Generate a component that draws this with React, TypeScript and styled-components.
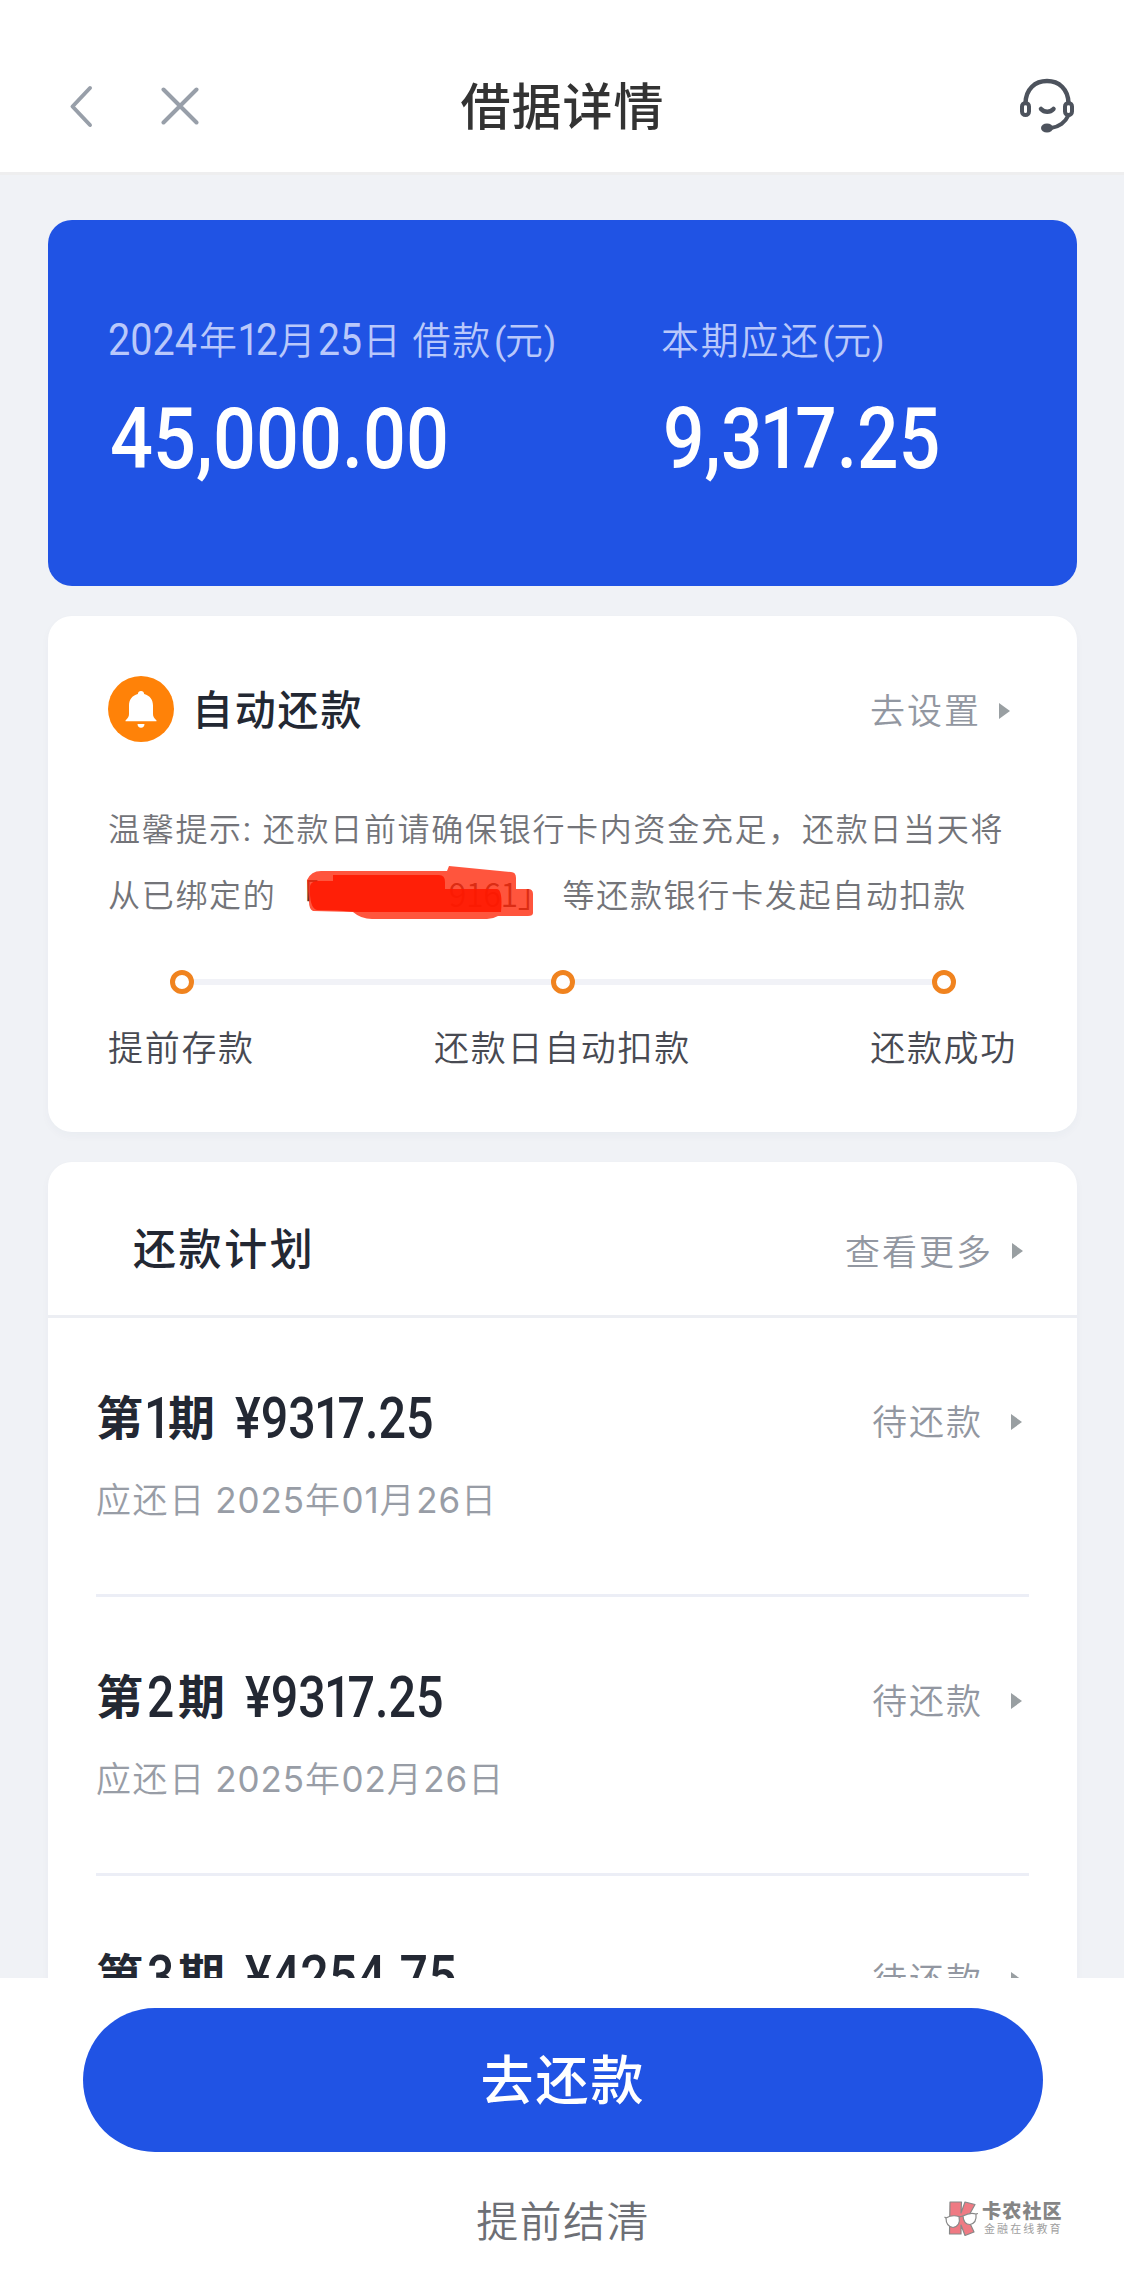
import React from 'react';
import styled, { createGlobalStyle } from 'styled-components';

const cjk = "'Noto Sans CJK SC', 'Noto Sans', sans-serif";

const GlobalStyle = createGlobalStyle`
  * { box-sizing: border-box; }
  body { margin: 0; background: #fff; font-family: ${cjk}; }
`;

const Screen = styled.div`
  display: flex;
  flex-direction: column;
  width: 1124px;
  height: 2288px;
  overflow: hidden;
  background: #f0f2f6;
`;

/* Header */
const Header = styled.header`
  display: grid;
  grid-template-columns: 1fr auto 1fr;
  align-items: center;
  height: 175px;
  padding: 39px 49px 0 65px;
  background: #fff;
  border-bottom: 3px solid #eeeeef;
  flex: none;
`;

const NavIcons = styled.div`
  display: flex;
  align-items: center;
  gap: 62px;
`;

const Title = styled.h1`
  margin: 0;
  padding-right: 15px;
  font-size: 50px;
  line-height: 60px;
  font-weight: 500;
  letter-spacing: 1px;
  color: #333;
  transform: translateY(-3px);
`;

const SupportIcon = styled.svg`
  justify-self: end;
`;

/* Scroll region */
const Content = styled.main`
  display: flex;
  flex-direction: column;
  gap: 30px;
  height: 1803px;
  flex: none;
  padding: 45px 47px 0 48px;
  overflow: hidden;
`;

const NumBox = styled.span<{ $w: number; $size: number; $sx?: number; $weight?: number; $left?: number; $drop?: number }>`
  display: inline-block;
  width: ${(p) => p.$w}px;
  margin-left: ${(p) => p.$left ?? 0}px;
  vertical-align: ${(p) => -(p.$drop ?? 0)}px;
  font-family: Roboto, sans-serif;
  font-size: ${(p) => p.$size}px;
  font-weight: ${(p) => p.$weight ?? 400};
  line-height: 1;
  letter-spacing: 0;
  white-space: pre;
  transform: scaleX(${(p) => p.$sx ?? 1});
  transform-origin: left;
`;

const NarrowOne = styled.span`
  margin: 0 -0.08em 0 -0.04em;
`;

type NumProps = React.ComponentProps<typeof NumBox> & { children: string };

/* Figures in which the digit one is set tighter than the others. */
function Num({ children, ...rest }: NumProps) {
  return (
    <NumBox {...rest}>
      {children.split(/(1)/).map((part, i) => (part === '1' && children.length > 1 ? <NarrowOne key={i}>1</NarrowOne> : part))}
    </NumBox>
  );
}

const Summary = styled.section`
  display: grid;
  grid-template-columns: 553px 1fr;
  align-content: start;
  height: 366px;
  flex: none;
  padding: 92px 0 0 60px;
  border-radius: 24px;
  background: #2053e4;
`;

const SummaryLabel = styled.div`
  height: 52px;
  line-height: 52px;
  font-size: 38px;
  font-weight: 350;
  letter-spacing: 1.8px;
  color: #b9c8fb;
  white-space: pre;
`;

const Amount = styled.div`
  height: 90px;
  margin-top: 32px;
  padding-left: 2px;
  line-height: 90px;
  color: #fff;
`;

const Card = styled.section`
  flex: none;
  border-radius: 24px;
  background: #fff;
  box-shadow: 0 4px 10px rgba(40, 50, 80, 0.03);
`;

const AutoCard = styled(Card)`
  height: 516px;
  padding: 60px 60px 0;
`;

const AutoHead = styled.div`
  display: flex;
  align-items: center;
  height: 66px;
  padding-right: 7px;
`;

const AutoTitle = styled.h2`
  flex: 1;
  margin: 0 0 5px 18px;
  font-size: 41px;
  line-height: 60px;
  font-weight: 500;
  letter-spacing: 1.8px;
  color: #232833;
`;

const LinkText = styled.span<{ $gap: number }>`
  display: flex;
  align-items: center;
  gap: ${(p) => p.$gap}px;
  font-size: 35px;
  line-height: 50px;
  font-weight: 350;
  letter-spacing: 2px;
  color: #9297a1;
`;

const Triangle = styled.i`
  width: 0;
  height: 0;
  margin-top: 3px;
  border-style: solid;
  border-width: 8px 0 8px 11px;
  border-color: transparent transparent transparent #999fa2;
`;

const Tip = styled.p`
  margin: 52px 0 0;
  width: 920px;
  height: 132px;
  font-size: 32px;
  line-height: 66px;
  font-weight: 350;
  letter-spacing: 1.7px;
  color: #737479;
  white-space: pre;
`;

const Masked = styled.span`
  position: relative;
  display: inline-block;
  width: 286px;
  height: 66px;
  vertical-align: top;
`;

const MaskedText = styled.span`
  display: flex;
  justify-content: space-between;
  padding-left: 10px;
  padding-right: 13px;
  color: #4a3434;
`;

const CardTail = styled.span`
  letter-spacing: -0.3px;
`;

const Scribble = styled.svg`
  position: absolute;
  left: 20px;
  top: 2px;
`;

const Steps = styled.div`
  display: flex;
  align-items: center;
  height: 24px;
  margin: 44px 61px 0 62px;
`;

const Dot = styled.span`
  width: 24px;
  height: 24px;
  border: 5px solid #f0831f;
  border-radius: 50%;
  background: #fff;
`;

const Track = styled.span`
  flex: 1;
  height: 6px;
  background: #f1f2f7;
`;

const StepLabels = styled.div`
  display: flex;
  justify-content: space-between;
  margin: 27px 0 0;
  font-size: 35px;
  line-height: 50px;
  font-weight: 350;
  letter-spacing: 1.7px;
  color: #484a52;
`;

const PlanCard = styled(Card)`
  height: 1000px;
`;

const PlanHead = styled.div`
  display: flex;
  align-items: center;
  justify-content: space-between;
  height: 156px;
  padding: 22px 54px 0 85px;
  border-bottom: 3px solid #eceef3;
`;

const PlanTitle = styled.h2`
  margin: 0;
  font-size: 43px;
  line-height: 60px;
  font-weight: 500;
  letter-spacing: 2.6px;
  color: #232833;
  transform: translateY(-4px);
`;

const PlanRow = styled.div`
  height: 279px;
  margin: 0 48px;
  padding-top: 69px;
  border-bottom: 3px solid #eceef6;
`;

const RowTop = styled.div`
  display: flex;
  justify-content: space-between;
  height: 66px;
  padding-right: 7px;
  align-items: center;
`;

const Period = styled.div`
  height: 66px;
  margin-top: -10px;
  line-height: 66px;
  font-size: 47px;
  font-weight: 700;
  color: #232833;
  white-space: pre;
`;

const Due = styled.div`
  display: flex;
  align-items: baseline;
  height: 50px;
  margin-top: 20px;
  font-size: 35px;
  line-height: 50px;
  font-weight: 350;
  letter-spacing: 1.6px;
  color: #989da6;
  white-space: pre;
`;

const DueNum = styled.span`
  font-family: Inter, sans-serif;
  font-size: 35px;
  font-weight: 400;
  letter-spacing: 0.9px;
`;

/* Bottom actions */
const Footer = styled.footer`
  position: relative;
  flex: 1;
  display: flex;
  flex-direction: column;
  align-items: center;
  padding: 30px 0 0 2px;
  background: #fff;
`;

const PayButton = styled.button`
  width: 960px;
  height: 144px;
  padding: 0 0 7px;
  border: 0;
  border-radius: 72px;
  background: #2053e4;
  color: #fff;
  font-family: ${cjk};
  font-size: 53px;
  font-weight: 500;
  letter-spacing: 2px;
`;

const SettleLink = styled.div`
  margin-top: 37px;
  font-size: 42px;
  line-height: 60px;
  font-weight: 350;
  letter-spacing: 1.4px;
  color: #6d6f75;
`;

const Watermark = styled.div`
  position: absolute;
  left: 943px;
  top: 221px;
  display: flex;
  gap: 3px;
`;

const BrandText = styled.div`
  display: flex;
  flex-direction: column;
`;

const Brand = styled.span`
  font-size: 19px;
  line-height: 22px;
  font-weight: 900;
  letter-spacing: 1.2px;
  color: #858585;
`;

const Slogan = styled.span`
  padding-left: 2px;
  font-size: 11px;
  line-height: 14px;
  letter-spacing: 2.1px;
  color: #a0a0a0;
`;

const rows = [
  { no: '1', noLeft: 1, noW: 24, amount: '¥9317.25', sx: 0.85, due: ['2025', '01', '26'] },
  { no: '2', noLeft: 4, noW: 31, amount: '¥9317.25', sx: 0.85, due: ['2025', '02', '26'] },
  { no: '3', noLeft: 4, noW: 31, amount: '¥4254.75', sx: 0.88, due: ['2025', '03', '26'] },
];

const Yuan = () => (
  <>
    <Num $w={11} $left={2} $size={36} $weight={400}>(</Num>元<Num $w={14} $left={-1} $size={36} $weight={400}>)</Num>
  </>
);

export default function App() {
  return (
    <>
      <GlobalStyle />
      <Screen>
        <Header>
          <NavIcons>
            <svg width="34" height="46" viewBox="0 0 34 46" fill="none" stroke="#989fa9" strokeWidth="4" strokeLinecap="round" strokeLinejoin="round">
              <path d="M25 5 7.500 23.500 25 42" />
            </svg>
            <svg width="38" height="40" viewBox="0 0 38 40" fill="none" stroke="#989fa9" strokeWidth="4" strokeLinecap="round">
              <path d="M2.500 3.500 35.500 36.500M35.500 3.500 2.500 36.500" />
            </svg>
          </NavIcons>
          <Title>借据详情</Title>
          <SupportIcon width="56" height="56" viewBox="0 0 56 56" fill="none" stroke="#4d535d" strokeWidth="4" strokeLinecap="round">
            <path d="M6.500 25C7 11 16 3 28 3s21 8 21.500 22" strokeWidth="4.500" />
            <rect x="3" y="25" width="7" height="12" rx="3.500" />
            <rect x="46" y="25" width="7" height="12" rx="3.500" />
            <path d="M22 31c3.500 3.800 9 3.800 12.500 0" strokeWidth="4.500" />
            <path d="M49 38c-2.500 6-9 11-17 12" />
            <ellipse cx="28" cy="50" rx="6" ry="4.600" fill="#4d535d" stroke="none" />
          </SupportIcon>
        </Header>

        <Content>
          <Summary>
            <div>
              <SummaryLabel>
                <Num $w={91} $size={45} $sx={0.88} $drop={1}>2024</Num>年<Num $w={39} $size={45} $sx={0.86} $drop={1}>12</Num>月<Num $w={45} $size={45} $sx={0.87} $drop={1}>25</Num>日<NumBox $w={10} $size={38}> </NumBox>借款<Yuan />
              </SummaryLabel>
              <Amount><Num $w={400} $size={86} $sx={0.88} $weight={500}>45,000.00</Num></Amount>
            </div>
            <div>
              <SummaryLabel>
                本期应还<Yuan />
              </SummaryLabel>
              <Amount><Num $w={400} $size={86} $sx={0.85} $weight={500}>9,317.25</Num></Amount>
            </div>
          </Summary>

          <AutoCard>
            <AutoHead>
              <svg width="66" height="66" viewBox="0 0 66 66">
                <circle cx="33" cy="33" r="33" fill="#ff8208" />
                <path d="M33 15c1.800 0 3 1.200 3.200 3C42 19.500 45 24 45 29.500V38c0 2.500 1 4 3.500 6.500v.8h-31v-.8C20 42 21 40.500 21 38v-8.500C21 24 24 19.500 29.800 18c.2-1.800 1.400-3 3.200-3z" fill="#fff" />
                <path d="M29.500 48h7c0 2.400-1.400 3.800-3.500 3.800S29.500 50.400 29.500 48z" fill="#fff" />
              </svg>
              <AutoTitle>自动还款</AutoTitle>
              <LinkText $gap={18}>去设置<Triangle /></LinkText>
            </AutoHead>
            <Tip>
              温馨提示<Num $w={20} $size={34}>:</Num>还款日前请确保银行卡内资金充足，还款日当天将{'\n'}从已绑定的<Masked>
                <MaskedText><span>「</span><CardTail>9161」</CardTail></MaskedText>
                <Scribble width="240" height="60" viewBox="0 0 240 60">
                  <path d="M10 18Q14 9 24 9H150L152 4 214 10Q219 10 219 16V27H231Q236 27 236 32V51Q236 54 231 54H201Q196 57 190 57H75Q64 57 56 50L16 49Q12 47 12 40Z" fill="#ff2a0c" opacity=".8" />
                  <path d="M13 24Q14 19 22 19H36V13H142Q148 13 148 20V27H200Q206 28 204 50H60Q40 48 20 48Q12 46 13 24Z" fill="#ff1800" opacity=".88" />
                </Scribble>
              </Masked>等还款银行卡发起自动扣款
            </Tip>
            <Steps>
              <Dot /><Track /><Dot /><Track /><Dot />
            </Steps>
            <StepLabels>
              <span>提前存款</span>
              <span>还款日自动扣款</span>
              <span>还款成功</span>
            </StepLabels>
          </AutoCard>

          <PlanCard>
            <PlanHead>
              <PlanTitle>还款计划</PlanTitle>
              <LinkText $gap={19}>查看更多<Triangle /></LinkText>
            </PlanHead>
            {rows.map((r) => (
              <PlanRow key={r.no}>
                <RowTop>
                  <Period>
                    第<Num $w={r.noW} $left={r.noLeft} $size={57} $sx={0.84} $weight={500} $drop={3}>{r.no}</Num>期 <Num $w={240} $left={9} $size={57} $sx={r.sx} $weight={500} $drop={3}>{r.amount}</Num>
                  </Period>
                  <LinkText $gap={28}>待还款<Triangle /></LinkText>
                </RowTop>
                <Due>
                  应还日 <DueNum>{r.due[0]}</DueNum>年<DueNum>{r.due[1]}</DueNum>月<DueNum>{r.due[2]}</DueNum>日
                </Due>
              </PlanRow>
            ))}
          </PlanCard>
        </Content>

        <Footer>
          <PayButton>去还款</PayButton>
          <SettleLink>提前结清</SettleLink>
          <Watermark>
            <svg width="36" height="38" viewBox="0 0 36 38" stroke="#888" strokeWidth="1.200" strokeLinejoin="round">
              <path d="M7 3H18.500L18 14 22 3 32 5.500 24.500 19 31 33 22 36.500 18 26V35H6.500Z" fill="#ef7a83" />
              <path d="M3 19Q9 15.500 16 17.500Q18 27 10 28.500Q3 27.500 3 19Z" fill="#fff" />
              <path d="M20 17Q27 13 33 15Q34 24 27 25.500Q20.500 25.500 20 17Z" fill="#fff" />
              <path d="M1.500 18 3 19M16 18l4-1M33 15l2-.5" fill="none" />
            </svg>
            <BrandText>
              <Brand>卡农社区</Brand>
              <Slogan>金融在线教育</Slogan>
            </BrandText>
          </Watermark>
        </Footer>
      </Screen>
    </>
  );
}
